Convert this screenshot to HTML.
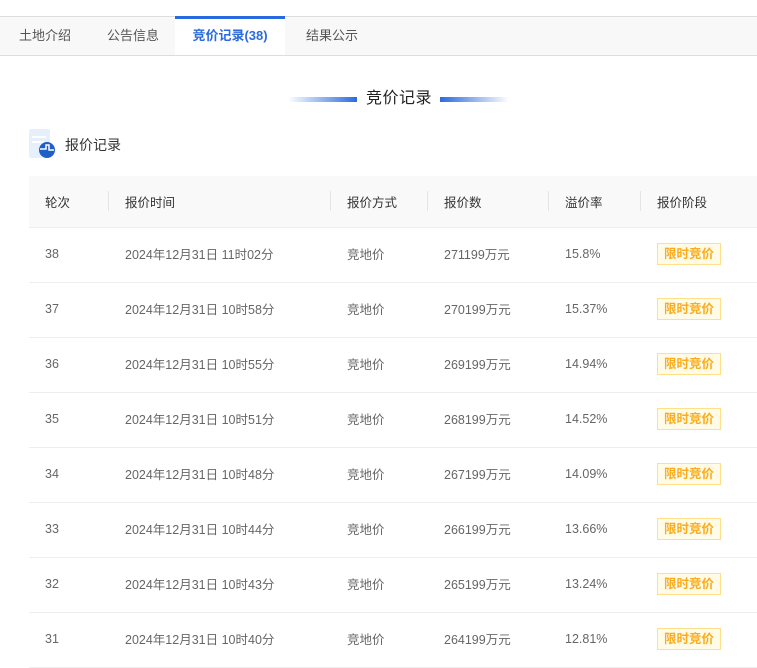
<!DOCTYPE html>
<html><head><meta charset="utf-8"><style>
*{margin:0;padding:0;box-sizing:border-box}
body{width:757px;height:657px;overflow:hidden;background:#fff;font-family:"Liberation Sans","Noto Sans CJK SC",sans-serif;position:relative;color:#333}
.tabs{position:absolute;left:0;top:16px;width:757px;height:40px;background:#f8f8f8;border-top:1px solid #ddd;border-bottom:1px solid #ddd}
.tab{position:absolute;top:0;height:38px;line-height:38px;font-size:13px;color:#555}
.act{left:175px;width:110px;background:#fff;text-align:center;color:#2a6ae0;font-weight:bold;border-top:3px solid #2a6ae0;line-height:34px;top:-1px;height:39px}
.title{position:absolute;top:88px;left:366px;font-size:16px;color:#222;line-height:22px;letter-spacing:0.5px}
.bar{position:absolute;top:97px;height:5px;width:69px}
.l{left:288px;background:linear-gradient(90deg,rgba(42,106,224,0),#2a6ae0)}
.r{left:440px;background:linear-gradient(90deg,#2a6ae0,rgba(42,106,224,0))}
.sub{position:absolute;left:65px;top:135px;font-size:14px;color:#333}
table{position:absolute;left:29px;top:176px;width:728px;border-collapse:collapse;font-size:12.5px}
th{height:51px;background:#f9f9f9;font-weight:normal;text-align:left;color:#333;position:relative;border-bottom:1px solid #eee;padding-top:0}
td{height:55px;color:#666;border-bottom:1px solid #eee;padding-bottom:2px}
th,td{padding-left:17px}
th:first-child,td:first-child{padding-left:16px}
th+th::before{content:"";position:absolute;left:0;top:15px;height:20px;border-left:1px solid #e5e5e5}
.b{display:inline-block;width:64px;height:22px;line-height:20px;text-align:center;border:1px solid #ffe08a;background:#fffbe6;color:#fbac1e;font-weight:bold;font-size:12.5px}
</style></head><body>
<div class="tabs">
<div class="tab" style="left:19px">土地介绍</div>
<div class="tab" style="left:107px">公告信息</div>
<div class="tab act">竞价记录(38)</div>
<div class="tab" style="left:306px">结果公示</div>
</div>
<div class="bar l"></div><div class="bar r"></div>
<div class="title">竞价记录</div>
<svg style="position:absolute;left:29px;top:129px" width="28" height="30" viewBox="0 0 28 30">
<rect x="0" y="0" width="21" height="29" rx="2" fill="#e6f0fd"/>
<rect x="3" y="7" width="14" height="2" fill="#fff"/><rect x="3" y="12" width="12" height="2" fill="#fff"/>
<circle cx="18" cy="21" r="8" fill="#1f5fc8"/>
<path d="M11 20h6v-4h3v5h5" stroke="#fff" stroke-width="1.5" fill="none"/>
</svg>
<div class="sub">报价记录</div>
<table>
<tr><th style="width:79px">轮次</th><th style="width:222px">报价时间</th><th style="width:97px">报价方式</th><th style="width:121px">报价数</th><th style="width:92px">溢价率</th><th>报价阶段</th></tr>
<tr><td>38</td><td>2024年12月31日 11时02分</td><td>竞地价</td><td>271199万元</td><td>15.8%</td><td><span class="b">限时竞价</span></td></tr>
<tr><td>37</td><td>2024年12月31日 10时58分</td><td>竞地价</td><td>270199万元</td><td>15.37%</td><td><span class="b">限时竞价</span></td></tr>
<tr><td>36</td><td>2024年12月31日 10时55分</td><td>竞地价</td><td>269199万元</td><td>14.94%</td><td><span class="b">限时竞价</span></td></tr>
<tr><td>35</td><td>2024年12月31日 10时51分</td><td>竞地价</td><td>268199万元</td><td>14.52%</td><td><span class="b">限时竞价</span></td></tr>
<tr><td>34</td><td>2024年12月31日 10时48分</td><td>竞地价</td><td>267199万元</td><td>14.09%</td><td><span class="b">限时竞价</span></td></tr>
<tr><td>33</td><td>2024年12月31日 10时44分</td><td>竞地价</td><td>266199万元</td><td>13.66%</td><td><span class="b">限时竞价</span></td></tr>
<tr><td>32</td><td>2024年12月31日 10时43分</td><td>竞地价</td><td>265199万元</td><td>13.24%</td><td><span class="b">限时竞价</span></td></tr>
<tr><td>31</td><td>2024年12月31日 10时40分</td><td>竞地价</td><td>264199万元</td><td>12.81%</td><td><span class="b">限时竞价</span></td></tr>
</table>
</body></html>
